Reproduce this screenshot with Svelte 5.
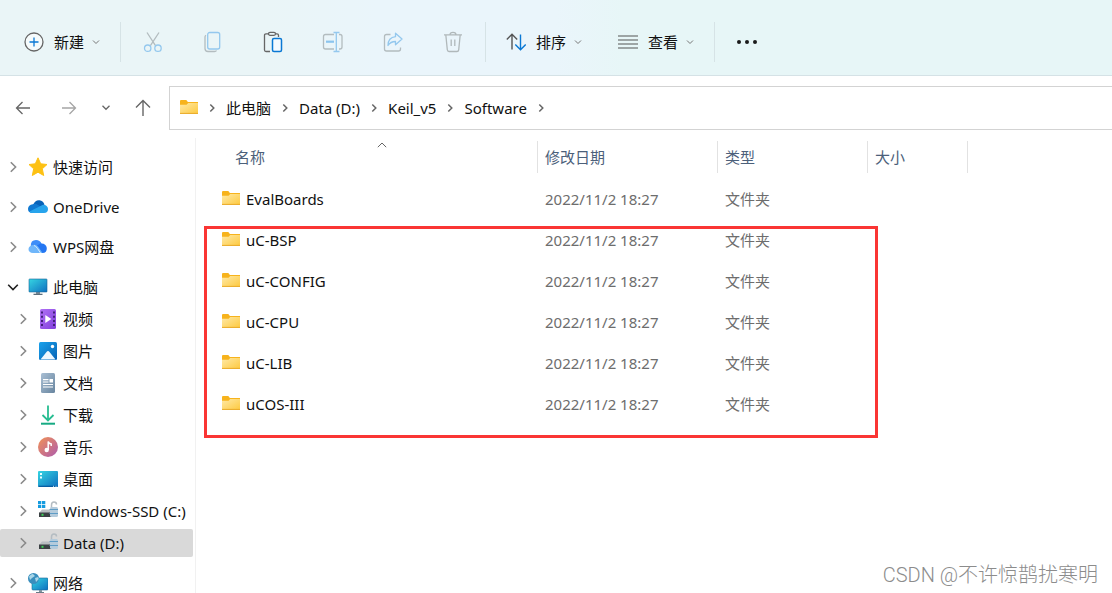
<script lang="ts">
  interface Place {
    icon: string;
    label: string;
    children?: Place[];
  }

  const tools = [
    { icon: "cut", label: "剪切" },
    { icon: "copy", label: "复制" },
    { icon: "paste", label: "粘贴" },
    { icon: "rename", label: "重命名" },
    { icon: "share", label: "共享" },
    { icon: "trash", label: "删除" },
  ];

  const places: Place[] = [
    { icon: "star", label: "快速访问" },
    { icon: "onedrive", label: "OneDrive" },
    { icon: "wps", label: "WPS网盘" },
    {
      icon: "pc",
      label: "此电脑",
      children: [
        { icon: "video", label: "视频" },
        { icon: "picture", label: "图片" },
        { icon: "document", label: "文档" },
        { icon: "download", label: "下载" },
        { icon: "music", label: "音乐" },
        { icon: "desktop", label: "桌面" },
        { icon: "windrive", label: "Windows-SSD (C:)" },
        { icon: "drive", label: "Data (D:)" },
      ],
    },
    { icon: "network", label: "网络" },
  ];

  const crumbs = ["此电脑", "Data (D:)", "Keil_v5", "Software"];

  const files = ["EvalBoards", "uC-BSP", "uC-CONFIG", "uC-CPU", "uC-LIB", "uCOS-III"].map((name) => ({
    name,
    modified: "2022/11/2 18:27",
    type: "文件夹",
  }));

  let pcOpen = $state(true);
  let selected = $state("Data (D:)");
</script>

{#snippet chevronDown()}
  <svg class="caret" width="8" height="8" viewBox="0 0 8 8" fill="none" stroke="#777" aria-hidden="true">
    <path d="M1 2.5l3 3 3-3" />
  </svg>
{/snippet}

{#snippet chevronRight()}
  <svg width="8" height="10" viewBox="0 0 8 10" fill="none" stroke="#666" stroke-width="1.5" aria-hidden="true">
    <path d="M2.300 1.500L5.800 5 2.300 8.500" />
  </svg>
{/snippet}

{#snippet folder()}
  <svg width="18" height="16" viewBox="0 1 18 16" aria-hidden="true">
    <path d="M0 2.2Q0 1 1 1h5.3l1.6 2H18v4H0z" fill="#f7b31c" />
    <path d="M0 5.8h6.6L8.2 4H18v11H0z" fill="url(#folder)" />
    <path d="M0 14.4h18" stroke="#e9ab2b" />
  </svg>
{/snippet}

{#snippet toolIcon(name: string)}
  <svg width="22" height="22" viewBox="0 0 22 22" fill="none" stroke-width="1.3" aria-hidden="true">
    {#if name === "cut"}
      <path d="M5 1.5l8.5 13.2M17 1.5L8.4 14.7" stroke="#b3bcbf" />
      <circle cx="5.7" cy="17.2" r="3.2" stroke="#94c8ee" />
      <circle cx="16" cy="17.2" r="3.2" stroke="#94c8ee" />
    {:else if name === "copy"}
      <path d="M4 4.2Q3 4.8 3 6v11.5Q3 20.500 6 20.500h6.500q1.500 0 2-1" stroke="#b3bcbf" />
      <rect x="5.700" y="1.500" width="12" height="16.500" rx="2" stroke="#94c8ee" />
    {:else if name === "paste"}
      <path d="M7 2.800H4Q2.500 2.800 2.500 4.300V19q0 1.500 1.500 1.500h4M13.500 2.800H15q1.500 0 1.500 1.500V6" stroke="#666" />
      <rect x="6.500" y="1.300" width="7" height="3" rx="1.500" stroke="#666" />
      <rect x="10.500" y="7.500" width="9" height="13" rx="1.500" fill="#f5faff" stroke="#0a78d4" stroke-width="1.500" />
    {:else if name === "rename"}
      <path d="M12 3.500H3.500q-2 0-2 2v10.500q0 2 2 2H12M17 3.500h1q2 0 2 2v10.500q0 2-2 2h-1" stroke="#b3bcbf" />
      <path d="M4 10.700h8" stroke="#8bc4ee" stroke-width="2.200" />
      <path d="M14.300 1.500v19M11.500 1.500h6M11.500 20.500h6" stroke="#94c8ee" />
    {:else if name === "share"}
      <path d="M8.500 3.500H4.500q-2 0-2 2V18q0 2 2 2h12q2 0 2-2v-1.500" stroke="#b3bcbf" />
      <path d="M13.500 2.200l6.500 5.800-6.500 5.800v-3.300Q8.500 10.500 6 14.500q0-8 7.500-8.800z" stroke="#94c8ee" stroke-linejoin="round" />
    {:else}
      <path d="M2 3.800h18M8 3.800q0-2.500 3-2.500t3 2.500M3.800 3.800l1.500 15q.2 1.700 1.700 1.700h8q1.500 0 1.700-1.700l1.500-15M9.200 8.500V15M12.800 8.500V15" stroke="#b0b8ba" />
    {/if}
  </svg>
{/snippet}

{#snippet placeIcon(name: string)}
  <svg width="20" height="20" viewBox="0 0 20 20" aria-hidden="true">
    {#if name === "star"}
      <path d="M10 .8l2.700 6 6.300.7-4.700 4.300 1.400 6.700L10 15.200l-5.700 3.300 1.400-6.700L1 7.500l6.300-.7z" fill="#fdc113" stroke="#fdc113" stroke-linejoin="round" />
    {:else if name === "onedrive"}
      <path d="M5 8Q7 2.800 11.500 3.200 15 3.500 16.500 7.500L11 11z" fill="#0862b8" />
      <path d="M4.800 7.200Q7.500 6.200 10 8l5 3-10 5H3.700Q0 15.500 0 11.800 .3 7.800 4.800 7.200z" fill="#1079d2" />
      <path d="M13.500 8.500Q15 7.200 17 8q3 1.200 3 4.300 0 3.700-4 3.700H4Q2 16 1.500 14.500z" fill="#27a4ec" />
    {:else if name === "wps"}
      <path d="M2.800 9Q2.500 3 8 3q4 0 5.500 3.500L12 15z" fill="#3d8df8" />
      <path d="M12 6.500q6-.8 6.800 4.500Q19 16 14.500 16H13L8.500 9z" fill="#2476f2" />
      <path d="M5 8q2.500-1 5 1.500l4.500 6.500H5Q.5 15.700.5 12 .8 8.800 5 8z" fill="#6fb6fa" />
      <path d="M6 8.500q1.500 0 3.500 3l3 4.500" fill="none" stroke="#d5ebff" />
    {:else if name === "pc"}
      <path d="M8 15h4v2.500H8z" fill="#7e8d99" />
      <path d="M5.500 16.700h9V18h-9z" fill="#5b6d7b" />
      <rect x="1" y="2" width="18" height="13" rx=".6" fill="url(#screen)" stroke="#176497" stroke-width=".6" />
    {:else if name === "video"}
      <rect x="2" y="0" width="16" height="20" rx="1.500" fill="url(#violet)" />
      <path d="M4 2.500v16M16 2.500v16" stroke="#43207b" stroke-width="2" stroke-dasharray="2 2.200" />
      <path d="M7.300 6v8l6-4z" fill="#fff" />
    {:else if name === "picture"}
      <rect x="1" y="1" width="18" height="18" rx="1.500" fill="url(#photo)" />
      <path d="M2.500 18.500l6-7.500q1.500-1.800 3 0l6 7.500z" fill="#eef8ff" />
      <circle cx="14.500" cy="5.500" r="1.700" fill="#fff" />
    {:else if name === "document"}
      <rect x="3" y="0" width="14" height="20" rx="1.500" fill="url(#slate)" />
      <path d="M5 6.700h5.500M5 9h5.500M5 11.500h10M5 14h10" stroke="#fff" stroke-width="1.200" />
      <path d="M11.500 6h3.500v3.500h-3.500z" fill="#fff" />
    {:else if name === "download"}
      <path d="M10 .5v15M4.500 10l5.500 5.500L15.500 10" fill="none" stroke="#27bd91" stroke-width="1.800" />
      <path d="M3 18.700h14" stroke="#16aa83" stroke-width="2" />
    {:else if name === "music"}
      <circle cx="10" cy="10" r="10" fill="url(#coral)" />
      <circle cx="8.700" cy="13" r="2.200" fill="#fff" />
      <path d="M10.200 13V4.500q.5 2.200 3 2.500v2" fill="none" stroke="#fff" stroke-width="1.500" />
    {:else if name === "desktop"}
      <rect x="0" y="2" width="20" height="16" rx="1" fill="url(#screen)" />
      <path d="M2 4h2v2H2zM2 7.500h2v2H2z" fill="#e9ffff" />
      <path d="M.5 17.300h19" stroke="#07599d" stroke-width="1.200" />
      <path d="M15 17.300h1M17.500 17.300h1" stroke="#c8f0ff" />
    {:else if name === "windrive" || name === "drive"}
      <path d="M4 8.500h12l3 3.500H1z" fill="#b9bec2" />
      <path d="M1 11.500h15V16H1z" fill="#3b4144" />
      <path d="M3.500 12.800h2v2h-2z" fill="#3cd357" />
      {#if name === "windrive"}
        <path d="M0 0h3.300v3.200H0zM4 0h3.300v3.200H4zM0 3.900h3.300v3.200H0zM4 3.900h3.300v3.200H4z" fill="#159bdf" />
      {/if}
      <path d="M13.500 7V4q0-3 2.500-3t2.500 2.500" fill="none" stroke="#b4bcc2" stroke-width="1.500" />
      <rect x="12" y="6" width="8" height="10" rx="1.500" fill="#b4cbdc" />
      <path d="M11.500 8.500H20M11.500 12.500H20" stroke="#5e9cc6" />
    {:else}
      <rect x="4" y="5" width="16" height="12" rx="1" fill="url(#screen)" stroke="#176497" stroke-width=".6" />
      <path d="M11 17h3v2h-3z" fill="#8294a0" />
      <path d="M8 19h8v1H8z" fill="#687b88" />
      <circle cx="5.500" cy="5.500" r="5.500" fill="#398ebd" />
      <path d="M1 3.500Q3 .5 5 1l2 2-3 2-2 2zM7 5l3-1 .8 2-2.800 3z" fill="#a9d6e8" />
    {/if}
  </svg>
{/snippet}

{#snippet placeRow(place: Place, nested: boolean)}
  <div class="place" class:nested class:selected={selected === place.label}>
    <button
      class="twist"
      class:open={place.children && pcOpen}
      type="button"
      aria-label="展开 {place.label}"
      onclick={() => place.children && (pcOpen = !pcOpen)}
    >
      <svg width="10" height="12" viewBox="0 0 10 12" fill="none" stroke="currentColor" stroke-width="1.6">
        <path d="M2.800 1.200L7.600 6l-4.800 4.800" />
      </svg>
    </button>
    <a href="#place" onclick={() => (selected = place.label)}>
      {@render placeIcon(place.icon)}
      <span>{place.label}</span>
    </a>
  </div>
{/snippet}

<svg class="defs" width="0" height="0" aria-hidden="true">
  <defs>
    <linearGradient id="folder" x1="0" y1="0" x2="1" y2="1">
      <stop offset="0" stop-color="#ffe9a6" /><stop offset="1" stop-color="#fdc93f" />
    </linearGradient>
    <linearGradient id="screen" x1="0" y1="0" x2="1" y2="1">
      <stop offset="0" stop-color="#35d5e2" /><stop offset="1" stop-color="#0f6fc0" />
    </linearGradient>
    <linearGradient id="violet" x1="0" y1="0" x2="1" y2="1">
      <stop offset="0" stop-color="#b070f5" /><stop offset="1" stop-color="#8240dc" />
    </linearGradient>
    <linearGradient id="photo" x1="0" y1="0" x2="1" y2="1">
      <stop offset="0" stop-color="#1aa2ec" /><stop offset="1" stop-color="#0763b5" />
    </linearGradient>
    <linearGradient id="slate" x1="0" y1="0" x2="1" y2="1">
      <stop offset="0" stop-color="#a9bfd4" /><stop offset="1" stop-color="#68859f" />
    </linearGradient>
    <linearGradient id="coral" x1="0" y1="0" x2="1" y2="1">
      <stop offset="0" stop-color="#f29255" /><stop offset="1" stop-color="#ad5bae" />
    </linearGradient>
  </defs>
</svg>

<div class="window">
  <header class="toolbar">
    <button class="command" type="button">
      <svg width="20" height="20" viewBox="0 0 20 20" fill="none" aria-hidden="true">
        <circle cx="10" cy="10" r="9" stroke="#666" stroke-width="1.300" fill="#f6fbfc" />
        <path d="M10 5.500v9M5.500 10h9" stroke="#0a78d4" stroke-width="1.300" />
      </svg>
      <span>新建</span>
      {@render chevronDown()}
    </button>
    <i class="divider"></i>
    {#each tools as tool}
      <button class="tool" type="button" aria-label={tool.label} disabled={tool.icon !== "paste"}>
        {@render toolIcon(tool.icon)}
      </button>
    {/each}
    <i class="divider"></i>
    <button class="command" type="button">
      <svg width="20" height="20" viewBox="0 0 20 20" fill="none" stroke-width="1.400" aria-hidden="true">
        <path d="M6 17.500V2.500M.8 7.500L6 2.300l5.200 5.200" stroke="#555" />
        <path d="M14.500 2.500v15M9.300 12.500l5.200 5.200 5.200-5.200" stroke="#0a78d4" />
      </svg>
      <span>排序</span>
      {@render chevronDown()}
    </button>
    <button class="command" type="button">
      <svg width="20" height="20" viewBox="0 0 20 20" stroke="#555" stroke-width="1.200" aria-hidden="true">
        <path d="M0 4h20M0 8h20M0 12h20M0 16h20" />
      </svg>
      <span>查看</span>
      {@render chevronDown()}
    </button>
    <i class="divider"></i>
    <button class="tool" type="button" aria-label="更多">
      <svg width="20" height="20" viewBox="0 0 20 20" fill="#1a1a1a" aria-hidden="true">
        <circle cx="2" cy="10" r="2" /><circle cx="10" cy="10" r="2" /><circle cx="18" cy="10" r="2" />
      </svg>
    </button>
  </header>

  <nav class="location" aria-label="地址">
    <button class="move" type="button" aria-label="后退">
      <svg width="16" height="16" viewBox="0 0 16 16" fill="none" stroke="#666" stroke-width="1.300">
        <path d="M15 8H1.500M7.500 2L1.500 8l6 6" />
      </svg>
    </button>
    <button class="move" type="button" aria-label="前进">
      <svg width="16" height="16" viewBox="0 0 16 16" fill="none" stroke="#a5a5a5" stroke-width="1.300">
        <path d="M1 8h13.500M8.500 2l6 6-6 6" />
      </svg>
    </button>
    <button class="move recent" type="button" aria-label="最近浏览的位置">
      <svg width="10" height="10" viewBox="0 0 10 10" fill="none" stroke="#666" stroke-width="1.300">
        <path d="M1.500 2.800L5 6.300l3.500-3.500" />
      </svg>
    </button>
    <button class="move" type="button" aria-label="向上">
      <svg width="18" height="18" viewBox="0 0 18 18" fill="none" stroke="#666" stroke-width="1.400">
        <path d="M9 17V1.500M2 8.500l7-7 7 7" />
      </svg>
    </button>
    <div class="address">
      {@render folder()}
      {@render chevronRight()}
      {#each crumbs as crumb}
        <a href="#crumb">{crumb}</a>
        {@render chevronRight()}
      {/each}
    </div>
  </nav>

  <div class="body">
    <aside>
      <ul>
        {#each places as place}
          <li>
            {@render placeRow(place, false)}
            {#if place.children && pcOpen}
              <ul class="children">
                {#each place.children as child}
                  <li>{@render placeRow(child, true)}</li>
                {/each}
              </ul>
            {/if}
          </li>
        {/each}
      </ul>
    </aside>

    <main>
      <table>
        <thead>
          <tr>
            <th class="name">
              <div>名称</div>
              <svg class="sort" width="10" height="6" viewBox="0 0 10 6" fill="none" stroke="#666" aria-hidden="true">
                <path d="M.8 5.200L5 1l4.200 4.200" />
              </svg>
            </th>
            <th class="date"><div>修改日期</div></th>
            <th class="type"><div>类型</div></th>
            <th class="size"><div>大小</div></th>
          </tr>
        </thead>
        <tbody>
          {#each files as file}
            <tr>
              <td>
                <div class="file">
                  {@render folder()}
                  <span>{file.name}</span>
                </div>
              </td>
              <td class="meta">{file.modified}</td>
              <td class="meta">{file.type}</td>
              <td></td>
            </tr>
          {/each}
        </tbody>
      </table>
      <div class="marker"></div>
    </main>
  </div>

  <div class="watermark">CSDN @不许惊鹊扰寒明</div>
</div>

<style>
  :global(body) {
    margin: 0;
    background: #fff;
  }

  .window {
    position: relative;
    height: 100vh;
    overflow: hidden;
    display: flex;
    flex-direction: column;
    font-family: "Noto Sans", "Noto Sans CJK SC", sans-serif;
    font-size: 15px;
    line-height: 20px;
    color: #111;
  }

  .defs {
    position: absolute;
  }

  svg {
    display: block;
    flex-shrink: 0;
  }

  button {
    padding: 0;
    border: 0;
    background: none;
    font: inherit;
    color: inherit;
  }

  a {
    color: inherit;
    text-decoration: none;
  }

  .toolbar {
    display: flex;
    align-items: center;
    flex-shrink: 0;
    padding: 22px 6px 13px;
    border-bottom: 1px solid #d5e2e6;
    background: linear-gradient(90deg, #eaf5f7 0%, #eaf5f7 24%, #eaf5fb 34%, #eaf5fb 50%, #e7f6f7 56%, #e7f6f7 100%);
  }

  .command {
    display: flex;
    align-items: center;
    height: 40px;
    padding: 0 18px;
    gap: 10px;
  }

  .caret {
    margin-left: -2px;
  }

  .tool {
    display: flex;
    align-items: center;
    justify-content: center;
    width: 60px;
    height: 40px;
  }

  .divider {
    width: 1px;
    height: 40px;
    margin: 0 2px;
    background: #d6e3e6;
  }

  .location {
    display: flex;
    align-items: center;
    flex-shrink: 0;
    padding-top: 10px;
  }

  .move {
    display: flex;
    align-items: center;
    justify-content: center;
    width: 46px;
    height: 40px;
  }

  .move.recent {
    width: 28px;
  }

  .address {
    flex: 1;
    display: flex;
    align-items: center;
    gap: 10px;
    height: 42px;
    margin-left: 3px;
    padding-left: 10px;
    border: 1px solid #d3d3d3;
    border-right: 0;
    white-space: nowrap;
  }

  .body {
    flex: 1;
    display: flex;
    min-height: 0;
    padding-top: 8px;
  }

  aside {
    flex: 0 0 195px;
    padding-top: 15px;
    border-right: 1px solid #f1f1f1;
  }

  ul {
    display: flex;
    flex-direction: column;
    gap: 12px;
    margin: 0;
    padding: 0;
    list-style: none;
  }

  ul.children {
    gap: 4px;
    margin-top: 4px;
  }

  .place {
    display: flex;
    align-items: center;
    gap: 7px;
    height: 28px;
    margin-right: 2px;
    padding-left: 5px;
    border-radius: 2px;
    white-space: nowrap;
  }

  .place.nested {
    padding-left: 15px;
  }

  .place.selected {
    background: #d9d9d9;
  }

  .place a {
    display: flex;
    align-items: center;
    gap: 5px;
  }

  .twist {
    display: flex;
    align-items: center;
    justify-content: center;
    width: 16px;
    height: 16px;
    color: #8a8a8a;
  }

  .twist.open {
    color: #222;
    transform: rotate(90deg);
  }

  main {
    position: relative;
    flex: 1;
    min-width: 0;
  }

  table {
    border-collapse: collapse;
    table-layout: fixed;
    width: 772px;
  }

  th {
    position: relative;
    padding: 3px 0 5px;
    font-weight: 400;
    text-align: left;
    color: #4c607a;
  }

  th div {
    height: 32px;
    padding-left: 7px;
    border-right: 1px solid #e2e2e2;
    line-height: 32px;
  }

  .name {
    width: 342px;
  }

  .name div {
    padding-left: 39px;
  }

  .date {
    width: 180px;
  }

  .type {
    width: 150px;
  }

  .sort {
    position: absolute;
    top: 4px;
    left: 181px;
  }

  td {
    height: 41px;
    padding: 0 0 0 7px;
  }

  .file {
    display: flex;
    align-items: center;
    gap: 6px;
    padding-left: 19px;
  }

  .meta {
    color: #6d6d6d;
  }

  .marker {
    position: absolute;
    top: 88px;
    left: 8px;
    box-sizing: border-box;
    width: 674px;
    height: 212px;
    border: 3px solid #fa3534;
    pointer-events: none;
  }

  .watermark {
    position: absolute;
    right: 14px;
    bottom: 4px;
    font-family: Roboto, "Noto Sans CJK SC", sans-serif;
    font-size: 20px;
    line-height: 28px;
    font-weight: 300;
    color: #8c8c8c;
  }
</style>
